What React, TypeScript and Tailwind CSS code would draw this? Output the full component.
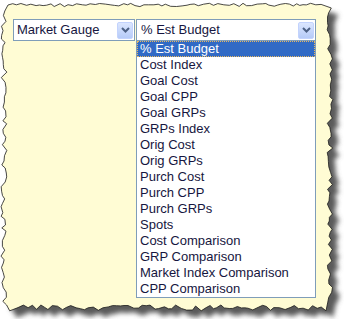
import React from "react";

const items = [
  "% Est Budget",
  "Cost Index",
  "Goal Cost",
  "Goal CPP",
  "Goal GRPs",
  "GRPs Index",
  "Orig Cost",
  "Orig GRPs",
  "Purch Cost",
  "Purch CPP",
  "Purch GRPs",
  "Spots",
  "Cost Comparison",
  "GRP Comparison",
  "Market Index Comparison",
  "CPP Comparison",
];

// torn paper outline, seeded so it is stable
function tornPath() {
  let s = 7;
  const rnd = () => {
    s = (s * 9301 + 49297) % 233280;
    return s / 233280;
  };
  const pts: [number, number][] = [];
  const L = 4, T = 5, R = 330, B = 308;
  for (let x = L + 4; x < R - 4; x += 3 + rnd() * 3) pts.push([x, T + (rnd() - 0.5) * 3.5]);
  for (let y = T + 3; y < B - 3; y += 3 + rnd() * 3) pts.push([R + (rnd() - 0.5) * 6, y]);
  for (let x = R - 4; x > L + 4; x -= 3 + rnd() * 3) pts.push([x, B + (rnd() - 0.5) * 6]);
  for (let y = B - 3; y > T + 3; y -= 3 + rnd() * 3) pts.push([L + (rnd() - 0.5) * 6, y]);
  return "M" + pts.map(([x, y]) => `${x.toFixed(1)},${y.toFixed(1)}`).join(" L") + " Z";
}

function Chevron() {
  return (
    <svg width="9" height="6" viewBox="0 0 9 6">
      <path d="M1 1 L4.5 4.5 L8 1" fill="none" stroke="#4d6185" strokeWidth="2" />
    </svg>
  );
}

function ArrowBtn() {
  return (
    <div className="w-[16px] h-[17px] flex items-center justify-center rounded-[2px] border border-[#c3d3fd] bg-gradient-to-b from-[#dbe6fe] to-[#b6cbf8]">
      <Chevron />
    </div>
  );
}

export default function App() {
  const d = tornPath();
  return (
    <div
      className="relative w-[344px] h-[319px] bg-white overflow-hidden text-[13px] text-[#161640]"
      style={{ fontFamily: '"Liberation Sans", Arial, sans-serif' }}
    >
      <svg className="absolute inset-0" width="344" height="319">
        <defs>
          <filter id="blur" x="-10%" y="-10%" width="120%" height="120%">
            <feGaussianBlur stdDeviation="2.5" />
          </filter>
        </defs>
        <path d={d} transform="translate(7 7)" fill="#5a5a5a" filter="url(#blur)" />
        <path d={d} fill="#fffcd4" stroke="#1a1a1a" strokeWidth="0.8" />
      </svg>

      <div className="relative flex items-start pt-[19px] pl-[13px]">
        <div className="w-[122px] h-[22px] border border-[#7f9db9] bg-white flex items-center justify-between pl-[3px] pr-[1px]">
          <span className="leading-[16px]">Market Gauge</span>
          <ArrowBtn />
        </div>
        <div className="ml-px w-[180px]">
          <div className="h-[22px] border border-[#7f9db9] bg-white flex items-center justify-between pl-[4px] pr-[1px]">
            <span className="leading-[16px]">% Est Budget</span>
            <ArrowBtn />
          </div>
          <div className="border border-t-0 border-[#7f9db9] bg-white">
            {items.map((it, i) =>
              i === 0 ? (
                <div
                  key={it}
                  className="h-[16px] leading-[14px] pl-[2px] bg-[#316ac5] text-white border border-dotted border-[#e8b860]"
                >
                  {it}
                </div>
              ) : (
                <div key={it} className="h-[16px] leading-[16px] pl-[3px] whitespace-nowrap">
                  {it}
                </div>
              )
            )}
          </div>
        </div>
      </div>
    </div>
  );
}
